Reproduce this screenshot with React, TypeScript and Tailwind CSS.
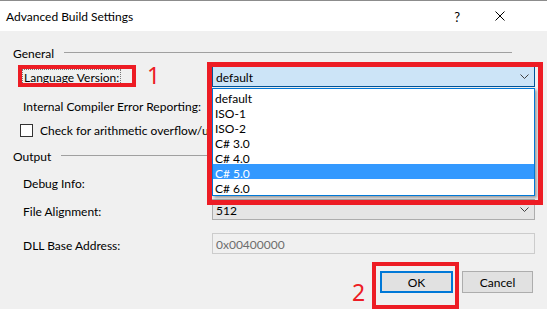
import React from "react";

const Chevron = () => (
  <svg width="9" height="5" viewBox="0 0 9 5" className="shrink-0">
    <polyline points="0.5,0.5 4.5,4.5 8.5,0.5" fill="none" stroke="#404040" strokeWidth="1" />
  </svg>
);

const GroupHeader = ({ label, className }: { label: string; className: string }) => (
  <div className={`flex items-center h-[16px] pl-[13px] pr-[35px] ${className}`}>
    <span className="pt-[4px]">{label}</span>
    <div className="flex-1 h-px bg-[#a0a0a0] ml-[10px]" />
  </div>
);

const Combo = ({ value, focused }: { value?: string; focused?: boolean }) => (
  <div
    className={`w-[323px] h-[21px] border flex items-center pl-[3px] pr-[5px] ${
      focused ? "border-[#005499] bg-[#cce4f7]" : "border-[#adadad] bg-[#e5e5e5]"
    }`}
  >
    <span className="flex-1 pt-[2px]">{value}</span>
    {value && <Chevron />}
  </div>
);

const Row = ({ label, children, className }: { label: React.ReactNode; children?: React.ReactNode; className: string }) => (
  <div className={`flex items-center h-[21px] ${className}`}>
    <div className="w-[212px] shrink-0 pl-[23px] whitespace-nowrap flex">{label}</div>
    {children}
  </div>
);

const items = ["default", "ISO-1", "ISO-2", "C# 3.0", "C# 4.0", "C# 5.0", "C# 6.0"];

export default function App() {
  return (
    <div className="relative w-[547px] h-[309px] overflow-hidden bg-[#f0f0f0] font-['Lato',sans-serif] text-[12px] text-black leading-none">
      {/* Title bar */}
      <div className="h-[31px] bg-white border-t border-[#8c8c8c] flex items-center pl-[6px]">
        <span className="flex-1 pt-[2px]">Advanced Build Settings</span>
        <span className="text-[13px] pt-[2px]">?</span>
        <svg width="10" height="10" viewBox="0 0 10 10" className="ml-[35px] mr-[42px]">
          <path d="M0.5 0.5 L9.5 9.5 M9.5 0.5 L0.5 9.5" stroke="#000" strokeWidth="1" fill="none" />
        </svg>
      </div>

      <GroupHeader label="General" className="mt-[13px]" />

      <Row
        label={
          <span className="border border-dotted border-[#777] pt-[2px] px-[1px] -ml-[1px]">Language Version:</span>
        }
        className="mt-[6px]"
      >
        <Combo value="default" focused />
      </Row>

      <Row label={<span className="pt-[4px]">Internal Compiler Error Reporting:</span>} className="mt-[7px]">
        <Combo />
      </Row>

      <div className="flex items-center h-[20px] mt-[5px] pl-[20px]">
        <div className="w-[13px] h-[13px] border border-[#333] bg-white shrink-0" />
        <span className="ml-[7px] w-[171px] overflow-hidden whitespace-nowrap pt-[2px]">
          Check for arithmetic overflow/underflow
        </span>
      </div>

      <GroupHeader label="Output" className="mt-[7px]" />

      <Row label={<span className="pt-[4px]">Debug Info:</span>} className="mt-[8px]">
        <Combo />
      </Row>

      <Row label={<span className="pt-[4px]">File Alignment:</span>} className="mt-[7px]">
        <Combo value="512" />
      </Row>

      <Row label={<span className="pt-[4px]">DLL Base Address:</span>} className="mt-[13px]">
        <div className="w-[323px] h-[21px] border border-[#cccccc] bg-[#f0f0f0] flex items-center pl-[3px] text-[#6d6d6d]">
          <span className="pt-[2px]">0x00400000</span>
        </div>
      </Row>

      <div className="flex justify-end gap-[9px] mt-[17px] pr-[14px]">
        <button className="w-[73px] h-[22px] border-2 border-[#0078d7] bg-[#e1e1e1] flex items-center justify-center">
          <span className="pt-[2px]">OK</span>
        </button>
        <button className="w-[71px] h-[22px] border border-[#adadad] bg-[#e1e1e1] flex items-center justify-center">
          <span className="pt-[2px]">Cancel</span>
        </button>
      </div>

      {/* Open dropdown list (overlays the form) */}
      <div className="absolute left-[212px] top-[88px] w-[323px] bg-white border border-[#0078d7] shadow-[2px_2px_3px_rgba(0,0,0,0.35)] z-10 flex flex-col pb-[1px]">
        {items.map((it) => (
          <div
            key={it}
            className={`h-[15px] flex items-center pl-[2px] ${it === "C# 5.0" ? "bg-[#3399ff] text-white" : ""}`}
          >
            <span className="pt-[4px]">{it}</span>
          </div>
        ))}
      </div>

      {/* Annotations */}
      <div className="absolute left-[18px] top-[65px] w-[118px] h-[22px] border-4 border-[#ed1c24] z-20" />
      <div className="absolute left-[147px] top-[64px] text-[23px] text-[#ed1c24] font-['Noto_Sans',sans-serif] z-20">1</div>
      <div className="absolute left-[207px] top-[62px] w-[336px] h-[143px] border-[5px] border-[#ed1c24] z-20" />
      <div className="absolute left-[372px] top-[262px] w-[87px] h-[47px] border-4 border-[#ed1c24] z-20" />
      <div className="absolute left-[352px] top-[281px] text-[23px] text-[#ed1c24] font-['Noto_Sans',sans-serif] z-20">2</div>
    </div>
  );
}
